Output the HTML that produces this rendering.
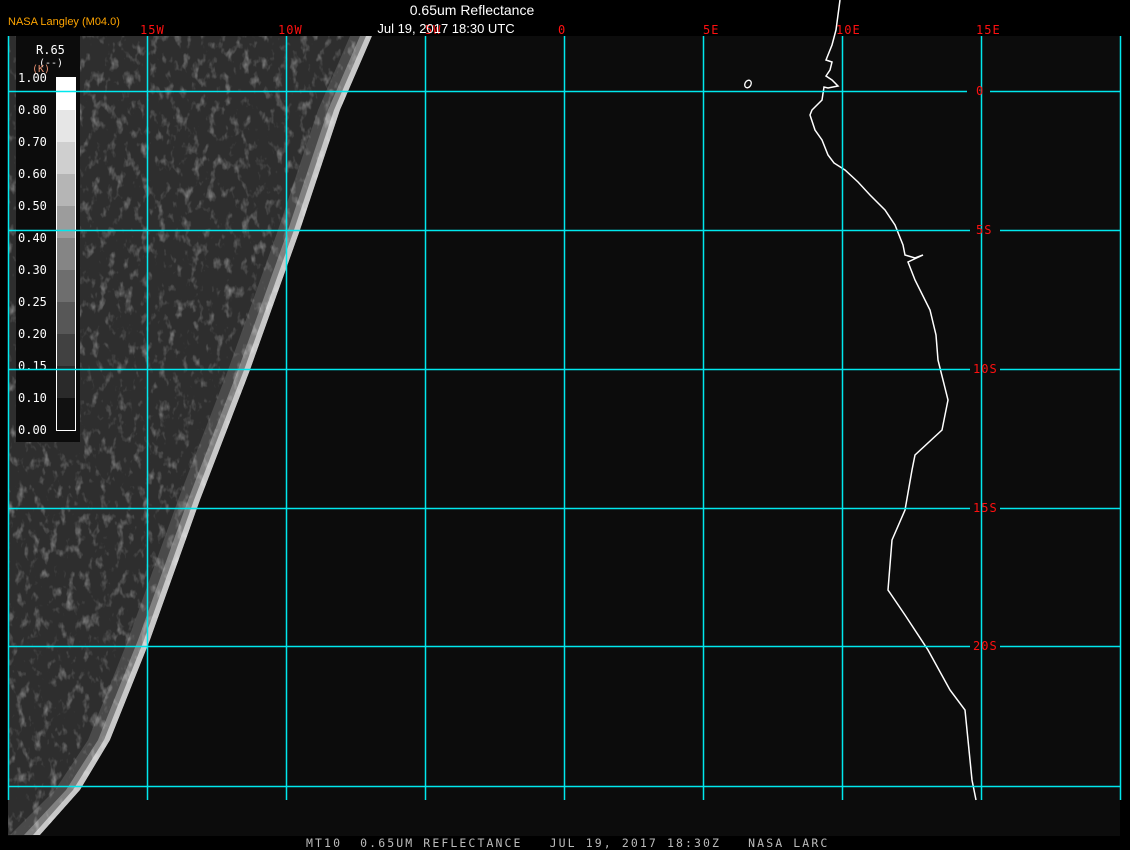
<!DOCTYPE html>
<html><head><meta charset="utf-8"><style>
html,body{margin:0;padding:0;background:#000;width:1130px;height:850px;overflow:hidden}
svg{display:block}
text{font-family:"DejaVu Sans Mono","Liberation Mono",monospace}
</style></head><body>
<svg width="1130" height="850" viewBox="0 0 1130 850">
<defs>
<filter id="n" x="0" y="0" width="1" height="1">
<feTurbulence type="fractalNoise" baseFrequency="0.12 0.07" numOctaves="3" seed="7"/>
<feColorMatrix type="matrix" values="0 0 0 0 1  0 0 0 0 1  0 0 0 0 1  2.4 0 0 0 -1.3"/>
</filter>
<clipPath id="c"><polygon points="8,36 372,36 340,110 300,230 250,370 200,500 150,640 110,740 80,790 40,835 8,835"/></clipPath>
</defs>
<rect x="8" y="36" width="1112" height="800" fill="#0c0c0c"/>
<g clip-path="url(#c)">
<polygon points="8,36 372,36 340,110 300,230 250,370 200,500 150,640 110,740 80,790 40,835 8,835" fill="#2e2e2e"/>
<polygon points="372,36 340,110 300,230 250,370 200,500 150,640 110,740 80,790 40,835 10,835 55,790 88,740 128,640 178,500 228,370 278,230 318,110 350,36" fill="#4a4a4a"/>
<polygon points="372,36 340,110 300,230 250,370 200,500 150,640 110,740 80,790 40,835 24,835 66,790 98,740 138,640 188,500 238,370 288,230 328,110 360,36" fill="#808080"/>
<polygon points="372,36 340,110 300,230 250,370 200,500 150,640 110,740 80,790 40,835 33,835 73,790 104,740 144,640 194,500 244,370 294,230 334,110 366,36" fill="#c8c8c8"/>
<rect x="8" y="36" width="370" height="800" filter="url(#n)" opacity="0.45"/>
</g>
<rect x="16" y="36" width="64" height="406" fill="#0c0c0c"/>
<g>
<rect x="56" y="77" width="19" height="33" fill="#fff"/>
<rect x="56" y="110" width="19" height="32" fill="#e6e6e6"/>
<rect x="56" y="142" width="19" height="32" fill="#cfcfcf"/>
<rect x="56" y="174" width="19" height="32" fill="#b5b5b5"/>
<rect x="56" y="206" width="19" height="32" fill="#9c9c9c"/>
<rect x="56" y="238" width="19" height="32" fill="#858585"/>
<rect x="56" y="270" width="19" height="32" fill="#6e6e6e"/>
<rect x="56" y="302" width="19" height="32" fill="#575757"/>
<rect x="56" y="334" width="19" height="32" fill="#414141"/>
<rect x="56" y="366" width="19" height="32" fill="#2a2a2a"/>
<rect x="56" y="398" width="19" height="32" fill="#111"/>
<rect x="56.5" y="77.5" width="19" height="353" fill="none" stroke="#fff"/>
</g>
<g fill="#fff" font-size="12">
<text x="36" y="54">R.65</text>
<text x="39" y="66" font-size="10">(--)</text>
<text x="18" y="82">1.00</text><text x="18" y="114">0.80</text><text x="18" y="146">0.70</text>
<text x="18" y="178">0.60</text><text x="18" y="210">0.50</text><text x="18" y="242">0.40</text>
<text x="18" y="274">0.30</text><text x="18" y="306">0.25</text><text x="18" y="338">0.20</text>
<text x="18" y="370">0.15</text><text x="18" y="402">0.10</text><text x="18" y="434">0.00</text>
</g>
<text x="32" y="72" fill="#e89070" font-size="10">(K)</text>
<path d="M840,0 L836,30 L832,45 L826,60 L832,62 L830,70 L826,76 L832,80 L838,86 L828,88 L824,87 L822,100 L812,110 L810,115 L815,130 L822,140 L828,155 L834,163 L845,170 L858,182 L870,195 L885,210 L895,225 L903,245 L905,255 L915,258 L923,255 L908,262 L915,280 L930,310 L936,335 L938,360 L948,400 L942,430 L915,455 L912,470 L905,510 L892,540 L888,590 L905,615 L928,650 L950,690 L965,710 L968,740 L972,780 L976,800" fill="none" stroke="#fff" stroke-width="1.5"/>
<ellipse cx="748" cy="84" rx="3" ry="4" transform="rotate(30 748 84)" fill="none" stroke="#fff" stroke-width="1.3"/>
<g stroke="#00e8ee" stroke-width="1.5">
<line x1="8.5" y1="36" x2="8.5" y2="800"/><line x1="147.5" y1="36" x2="147.5" y2="800"/>
<line x1="286.5" y1="36" x2="286.5" y2="800"/><line x1="425.5" y1="36" x2="425.5" y2="800"/>
<line x1="564.5" y1="36" x2="564.5" y2="800"/><line x1="703.5" y1="36" x2="703.5" y2="800"/>
<line x1="842.5" y1="36" x2="842.5" y2="800"/><line x1="981.5" y1="36" x2="981.5" y2="800"/>
<line x1="1120.5" y1="36" x2="1120.5" y2="800"/>
<line x1="8" y1="91.5" x2="967" y2="91.5"/><line x1="990" y1="91.5" x2="1120" y2="91.5"/>
<line x1="8" y1="230.5" x2="970" y2="230.5"/><line x1="1000" y1="230.5" x2="1120" y2="230.5"/>
<line x1="8" y1="369.5" x2="970" y2="369.5"/><line x1="1000" y1="369.5" x2="1120" y2="369.5"/>
<line x1="8" y1="508.5" x2="970" y2="508.5"/><line x1="1000" y1="508.5" x2="1120" y2="508.5"/>
<line x1="8" y1="646.5" x2="970" y2="646.5"/><line x1="1000" y1="646.5" x2="1120" y2="646.5"/>
<line x1="8" y1="786.5" x2="1120" y2="786.5"/>
</g>
<g fill="#ff1010" font-size="12" letter-spacing="1">
<text x="140" y="34">15W</text><text x="278" y="34">10W</text><text x="425" y="34">5W</text>
<text x="558" y="34">0</text><text x="703" y="34">5E</text><text x="836" y="34">10E</text><text x="976" y="34">15E</text>
<text x="976" y="95">0</text><text x="976" y="234">5S</text><text x="973" y="373">10S</text>
<text x="973" y="512">15S</text><text x="973" y="650">20S</text>
</g>
<text x="8" y="25" fill="#ffa500" font-size="11" style="font-family:'Liberation Sans',sans-serif">NASA Langley (M04.0)</text>
<text x="472" y="15" fill="#fff" font-size="14" text-anchor="middle" style="font-family:'Liberation Sans',sans-serif">0.65um Reflectance</text>
<text x="446" y="33" fill="#fff" font-size="13" text-anchor="middle" style="font-family:'Liberation Sans',sans-serif">Jul 19, 2017 18:30 UTC</text>
<text x="306" y="847" fill="#bbb" font-size="11.5" letter-spacing="2.1" xml:space="preserve">MT10  0.65UM REFLECTANCE   JUL 19, 2017 18:30Z   NASA LARC</text>
</svg>
</body></html>
